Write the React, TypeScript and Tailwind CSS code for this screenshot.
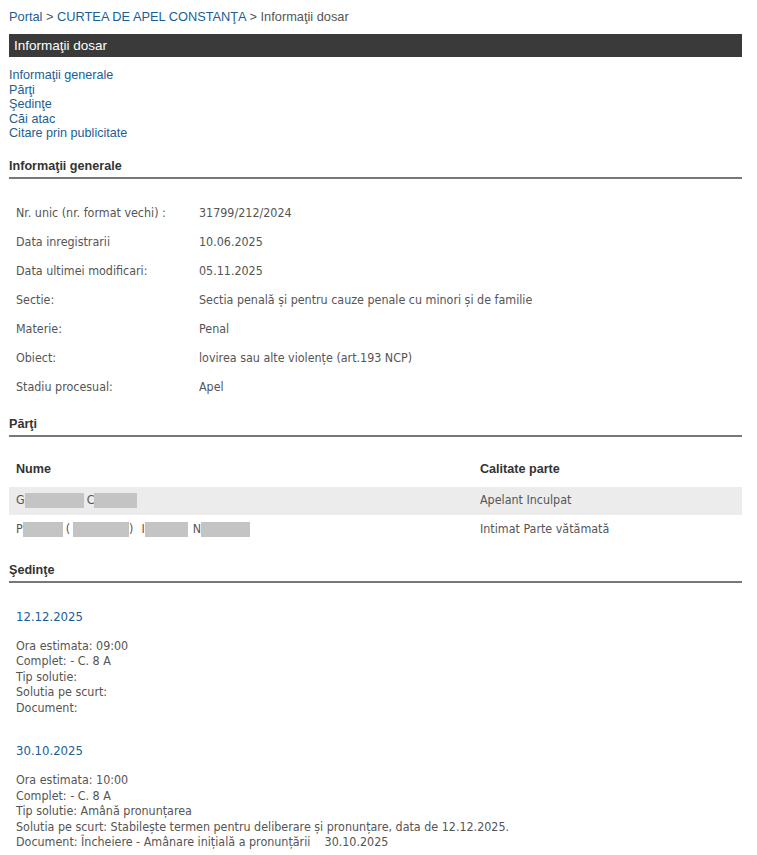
import React from 'react';

const info: [string, string][] = [
    ['Nr. unic (nr. format vechi) :', '31799/212/2024'],
    ['Data inregistrarii', '10.06.2025'],
    ['Data ultimei modificari:', '05.11.2025'],
    ['Sectie:', 'Sectia penală și pentru cauze penale cu minori și de familie'],
    ['Materie:', 'Penal'],
    ['Obiect:', 'lovirea sau alte violențe (art.193 NCP)'],
    ['Stadiu procesual:', 'Apel'],
];

const Box = ({ w }: { w: number }) => (
    <span className="inline-block h-[15px] bg-[#c4c4c4] align-middle" style={{ width: w }} />
);

const SectionTitle = ({ children }: { children: React.ReactNode }) => (
    <h3 className="font-bold text-[12.6px] text-[#333] pb-[3px] border-b-2 border-[#777] leading-[15px]">{children}</h3>
);

const sedinte = [
    {
        date: '12.12.2025',
        lines: ['Ora estimata: 09:00', 'Complet: - C. 8 A', 'Tip solutie:', 'Solutia pe scurt:', 'Document:'],
    },
    {
        date: '30.10.2025',
        lines: [
            'Ora estimata: 10:00',
            'Complet: - C. 8 A',
            'Tip solutie: Amână pronunțarea',
            'Solutia pe scurt: Stabilește termen pentru deliberare și pronunțare, data de 12.12.2025.',
            'Document: Încheiere - Amânare inițială a pronunțării\u00a0\u00a0\u00a0\u00a030.10.2025',
        ],
    },
];

export default function App() {
    const data = "font-['DejaVu_Sans_Condensed','Liberation_Sans',sans-serif] text-[12.4px] text-[#555]";
    return (
        <div className="bg-white min-h-screen font-['Liberation_Sans',Arial,sans-serif] pl-[9px] pr-[15px] pt-[9px]">
            <div className="w-[733px]">
                <div className="text-[12.8px] text-[#555] leading-[16px]">
                    <a className="text-[#1b5e95]">Portal</a> &gt; <a className="text-[#1b5e95]">CURTEA DE APEL CONSTANŢA</a> &gt; Informaţii dosar
                </div>
                <div className="mt-[9px] bg-[#3a3a3a] text-white text-[13.5px] h-[23px] leading-[23px] px-[5px]">Informaţii dosar</div>
                <div className="mt-[11px] flex flex-col text-[12.6px] leading-[14.5px] text-[#1b5e95]">
                    <a>Informaţii generale</a>
                    <a>Părţi</a>
                    <a>Şedinţe</a>
                    <a>Căi atac</a>
                    <a>Citare prin publicitate</a>
                </div>

                <div className="mt-[18px]">
                    <SectionTitle>Informaţii generale</SectionTitle>
                    <div className={`${data} mt-[20px] flex flex-col`}>
                        {info.map(([k, v]) => (
                            <div key={k} className="flex h-[29px] items-center px-[7px]">
                                <div className="w-[183px]">{k}</div>
                                <div>{v}</div>
                            </div>
                        ))}
                    </div>
                </div>

                <div className="mt-[15px]">
                    <SectionTitle>Părţi</SectionTitle>
                    <div className="mt-[16px]">
                        <div className="flex h-[34px] items-center px-[7px] text-[12.6px] font-bold text-[#333]">
                            <div className="w-[464px]">Nume</div>
                            <div>Calitate parte</div>
                        </div>
                        <div className={`${data} flex h-[28px] items-center px-[7px] bg-[#ececec]`}>
                            <div className="w-[464px] flex items-center">
                                G<Box w={59} />
                                <span className="ml-[3px]">C</span>
                                <Box w={43} />
                            </div>
                            <div>Apelant Inculpat</div>
                        </div>
                        <div className={`${data} flex h-[30px] items-center px-[7px]`}>
                            <div className="w-[464px] flex items-center">
                                P<Box w={40} />
                                <span className="ml-[3px]">(</span>
                                <span className="ml-[3px]"><Box w={56} /></span>
                                <span>)</span>
                                <span className="ml-[8px]">I</span>
                                <Box w={43} />
                                <span className="ml-[5px]">N</span>
                                <Box w={49} />
                            </div>
                            <div>Intimat Parte vătămată</div>
                        </div>
                    </div>
                </div>

                <div className="mt-[18px]">
                    <SectionTitle>Şedinţe</SectionTitle>
                    <div className={`${data} px-[7px]`}>
                        {sedinte.map((s, i) => (
                            <div key={s.date} className={i === 0 ? 'pt-[26px]' : 'pt-[28px]'}>
                                <div className="text-[#1b5e95] text-[13px] leading-[16px]">{s.date}</div>
                                <div className="mt-[13px] flex flex-col leading-[15.5px]">
                                    {s.lines.map((l) => (
                                        <div key={l} className="whitespace-pre">{l}</div>
                                    ))}
                                </div>
                            </div>
                        ))}
                    </div>
                </div>
            </div>
        </div>
    );
}
